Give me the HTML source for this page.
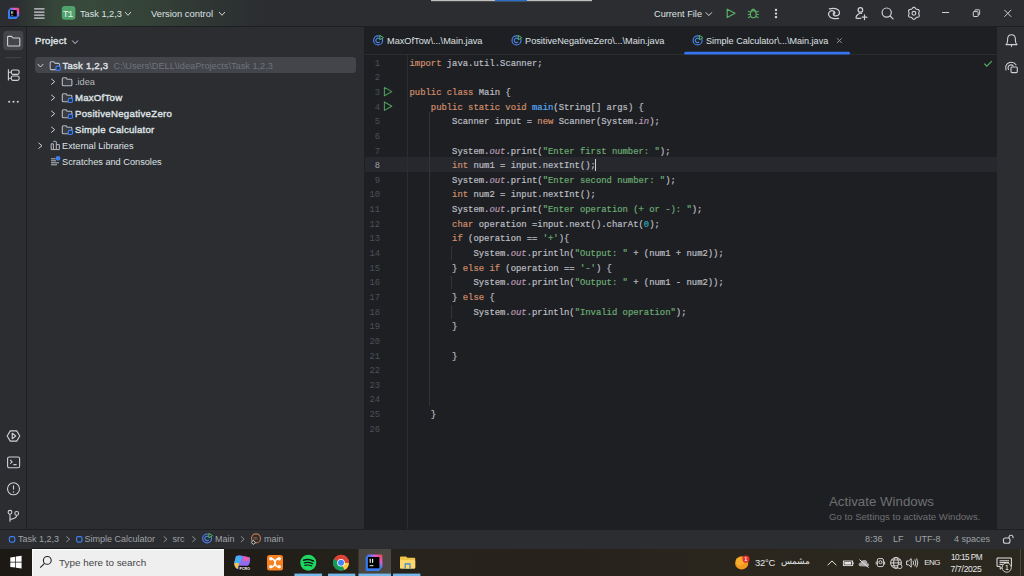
<!DOCTYPE html>
<html><head><meta charset="utf-8">
<style>
*{margin:0;padding:0;box-sizing:border-box}
html,body{width:1024px;height:576px;overflow:hidden;background:#2B2D30;font-family:"Liberation Sans",sans-serif;color:#DFE1E5}
.a{position:absolute}
#tb{left:0;top:0;width:1024px;height:27px;background:#2B2D30;border-bottom:1px solid #1E1F22}
#glow{left:0;top:0;width:300px;height:26px;background:linear-gradient(90deg,rgba(84,140,84,0) 14px,rgba(84,140,84,.27) 55px,rgba(84,140,84,.30) 90px,rgba(84,140,84,.2) 160px,rgba(84,140,84,.08) 215px,rgba(84,140,84,0) 265px)}
#ls{left:0;top:27px;width:27px;height:503px;background:#2B2D30;border-right:1px solid #1E1F22}
#pp{left:27px;top:27px;width:338px;height:503px;background:#2B2D30;border-right:1px solid #1E1F22}
#ed{left:365px;top:27px;width:632px;height:503px;background:#1E1F22}
#rs{left:996px;top:27px;width:28px;height:503px;background:#2B2D30;border-left:1px solid #1E1F22}
#sb{left:0;top:529px;width:1024px;height:20px;background:#2B2D30;border-top:1px solid #1E1F22}
#tk{left:0;top:549px;width:1024px;height:27px;background:linear-gradient(90deg,#1c1915 0%,#1f1c17 22%,#28241d 42%,#27231c 55%,#2a261e 70%,#2b2820 100%)}
.ui{font-size:9.2px;white-space:nowrap;line-height:12px}
.b{font-weight:bold}
.sb{-webkit-text-stroke:.4px #DFE1E5;letter-spacing:.25px;font-size:9.6px}
.code{left:409.5px;font-family:"Liberation Mono",monospace;font-size:8.9px;white-space:pre;line-height:14.64px;color:#BCBEC4;-webkit-text-stroke-width:.2px}
.ln{left:350px;font-family:"Liberation Mono",monospace;font-size:8.8px;line-height:14.64px;text-align:right;width:30px}
.k{color:#CF8E6D}.s{color:#6AAB73}.n{color:#2AACB8}.m{color:#56A8F5}.f{color:#B898B4;font-style:italic}
.st{color:#A0A3A8;font-size:9px;line-height:12px;white-space:nowrap;margin-top:-.3px}
</style></head><body>
<div id="tb" class="a"></div>
<div id="glow" class="a"></div>
<div id="ls" class="a"></div>
<div id="pp" class="a"></div>
<div id="ed" class="a"></div>
<div id="rs" class="a"></div>
<div id="sb" class="a"></div>
<div id="tk" class="a"></div>

<!-- toolbar text -->
<div class="a ui" style="left:80px;top:8px">Task 1,2,3</div>
<div class="a ui" style="left:151px;top:8px;font-size:9.4px">Version control</div>
<div class="a ui" style="left:654px;top:8px">Current File</div>

<!-- project panel -->
<div class="a" style="left:35px;top:57.1px;width:321.3px;height:16.3px;background:#43454A;border-radius:3.5px"></div>
<div class="a ui sb" style="left:35px;top:35px">Project</div>
<div class="a ui sb" style="left:62.5px;top:59.6px;font-size:9.5px">Task 1,2,3</div><div class="a ui" style="left:113.5px;top:59.6px;color:#6F737A">C:\Users\DELL\IdeaProjects\Task 1,2,3</div>
<div class="a ui" style="left:75px;top:76px;color:#B9BBC0">.idea</div>
<div class="a ui sb" style="left:75px;top:92px">MaxOfTow</div>
<div class="a ui sb" style="left:75px;top:108px;letter-spacing:.3px">PositiveNegativeZero</div>
<div class="a ui sb" style="left:75px;top:124px">Simple Calculator</div>
<div class="a ui" style="left:62px;top:140px">External Libraries</div>
<div class="a ui" style="left:62px;top:156px">Scratches and Consoles</div>

<!-- tabs -->
<div class="a ui" style="left:387px;top:35px">MaxOfTow\...\Main.java</div>
<div class="a ui" style="left:525px;top:35px">PositiveNegativeZero\...\Main.java</div>
<div class="a ui" style="left:706px;top:35px;font-size:9.05px">Simple Calculator\...\Main.java</div>
<div class="a" style="left:365px;top:54px;width:632px;height:1px;background:#2B2D30"></div>

<!-- editor -->
<div class="a" style="left:365px;top:156.9px;width:632px;height:14.7px;background:#26282E"></div>
<div class="a" style="left:407px;top:55px;width:1px;height:474px;background:#2B2D30"></div>
<div class="a" style="left:429px;top:112px;width:1px;height:294px;background:#313438"></div>
<div class="a" style="left:450.5px;top:246px;width:1px;height:13.5px;background:#313438"></div>
<div class="a" style="left:450.5px;top:275.5px;width:1px;height:13.5px;background:#313438"></div>
<div class="a" style="left:450.5px;top:304.5px;width:1px;height:14px;background:#313438"></div>
<div class="a ln" style="top:56.70px;color:#4B5059">1</div>
<div class="a ln" style="top:71.34px;color:#4B5059">2</div>
<div class="a ln" style="top:85.98px;color:#4B5059">3</div>
<div class="a ln" style="top:100.62px;color:#4B5059">4</div>
<div class="a ln" style="top:115.26px;color:#4B5059">5</div>
<div class="a ln" style="top:129.90px;color:#4B5059">6</div>
<div class="a ln" style="top:144.54px;color:#4B5059">7</div>
<div class="a ln" style="top:159.18px;color:#A1A3AB">8</div>
<div class="a ln" style="top:173.82px;color:#4B5059">9</div>
<div class="a ln" style="top:188.46px;color:#4B5059">10</div>
<div class="a ln" style="top:203.10px;color:#4B5059">11</div>
<div class="a ln" style="top:217.74px;color:#4B5059">12</div>
<div class="a ln" style="top:232.38px;color:#4B5059">13</div>
<div class="a ln" style="top:247.02px;color:#4B5059">14</div>
<div class="a ln" style="top:261.66px;color:#4B5059">15</div>
<div class="a ln" style="top:276.30px;color:#4B5059">16</div>
<div class="a ln" style="top:290.94px;color:#4B5059">17</div>
<div class="a ln" style="top:305.58px;color:#4B5059">18</div>
<div class="a ln" style="top:320.22px;color:#4B5059">19</div>
<div class="a ln" style="top:334.86px;color:#4B5059">20</div>
<div class="a ln" style="top:349.50px;color:#4B5059">21</div>
<div class="a ln" style="top:364.14px;color:#4B5059">22</div>
<div class="a ln" style="top:378.78px;color:#4B5059">23</div>
<div class="a ln" style="top:393.42px;color:#4B5059">24</div>
<div class="a ln" style="top:408.06px;color:#4B5059">25</div>
<div class="a ln" style="top:422.70px;color:#4B5059">26</div>
<div class="a code" style="top:56.70px"><span class="k">import</span> java.util.Scanner;</div>
<div class="a code" style="top:85.98px"><span class="k">public class</span> Main {</div>
<div class="a code" style="top:100.62px">    <span class="k">public static void</span> <span class="m">main</span>(String[] args) {</div>
<div class="a code" style="top:115.26px">        Scanner input = <span class="k">new</span> Scanner(System.<span class="f">in</span>);</div>
<div class="a code" style="top:144.54px">        System.<span class="f">out</span>.print(<span class="s">"Enter first number: "</span>);</div>
<div class="a code" style="top:159.18px">        <span class="k">int</span> num1 = input.nextInt();</div>
<div class="a code" style="top:173.82px">        System.<span class="f">out</span>.print(<span class="s">"Enter second number: "</span>);</div>
<div class="a code" style="top:188.46px">        <span class="k">int</span> num2 = input.nextInt();</div>
<div class="a code" style="top:203.10px">        System.<span class="f">out</span>.print(<span class="s">"Enter operation (+ or -): "</span>);</div>
<div class="a code" style="top:217.74px">        <span class="k">char</span> operation =input.next().charAt(<span class="n">0</span>);</div>
<div class="a code" style="top:232.38px">        <span class="k">if</span> (operation == <span class="s">'+'</span>){</div>
<div class="a code" style="top:247.02px">            System.<span class="f">out</span>.println(<span class="s">"Output: "</span> + (num1 + num2));</div>
<div class="a code" style="top:261.66px">        } <span class="k">else if</span> (operation == <span class="s">'-'</span>) {</div>
<div class="a code" style="top:276.30px">            System.<span class="f">out</span>.println(<span class="s">"Output: "</span> + (num1 - num2));</div>
<div class="a code" style="top:290.94px">        } <span class="k">else</span> {</div>
<div class="a code" style="top:305.58px">            System.<span class="f">out</span>.println(<span class="s">"Invalid operation"</span>);</div>
<div class="a code" style="top:320.22px">        }</div>
<div class="a code" style="top:349.50px">        }</div>
<div class="a code" style="top:408.06px">    }</div>
<div class="a" style="left:595.3px;top:158.5px;width:1px;height:12px;background:#CED0D6"></div>

<!-- status bar -->
<div class="a st" style="left:18px;top:533px">Task 1,2,3</div>
<div class="a st" style="left:84.5px;top:533px">Simple Calculator</div>
<div class="a st" style="left:172.5px;top:533px">src</div>
<div class="a st" style="left:215px;top:533px">Main</div>
<div class="a st" style="left:264px;top:533px">main</div>
<div class="a st" style="left:865px;top:533px">8:36</div>
<div class="a st" style="left:893px;top:533px">LF</div>
<div class="a st" style="left:915px;top:533px">UTF-8</div>
<div class="a st" style="left:954px;top:533px">4 spaces</div>

<!-- activate windows -->
<div class="a" style="left:829px;top:493.5px;font-size:13.3px;color:#6E6F72;white-space:nowrap">Activate Windows</div>
<div class="a" style="left:829px;top:511px;font-size:9.6px;color:#6E6F72;white-space:nowrap">Go to Settings to activate Windows.</div>

<!-- taskbar -->
<div class="a" style="left:32px;top:548px;width:192px;height:1px;background:#1b1b1c"></div><div class="a" style="left:32px;top:549px;width:192px;height:27px;background:#EFEFEF;border-top:1px solid #FFFFFF;border-left:1px solid #FAFAFA"></div>
<div class="a" style="left:59px;top:556.5px;font-size:9.9px;color:#444444;white-space:nowrap">Type here to search</div>
<div class="a" style="left:755px;top:556.8px;font-size:9.4px;letter-spacing:-0.25px;color:#E6E6E6;white-space:nowrap">32°C</div>
<div class="a" style="left:781px;top:555px;font-size:9.4px;color:#E6E6E6;white-space:nowrap">مشمس</div>
<div class="a" style="left:924.3px;top:557.6px;font-size:8px;letter-spacing:-0.6px;color:#E6E6E6;white-space:nowrap">ENG</div>
<div class="a" style="left:951px;top:552.8px;font-size:8.2px;letter-spacing:-0.5px;color:#E6E6E6;white-space:nowrap">10:15 PM</div>
<div class="a" style="left:950.5px;top:564px;font-size:8.6px;letter-spacing:-0.3px;color:#E6E6E6;white-space:nowrap">7/7/2025</div>

<svg class="a" style="left:0;top:0" width="1024" height="576" viewBox="0 0 1024 576">
<rect x="431" y="0" width="161" height="1.2" fill="#BFBFBF"/><rect x="495" y="0" width="32" height="1.2" fill="#2A6FC9"/>
<defs><linearGradient id="ijg" x1="0" y1="1" x2="1" y2="0"><stop offset="0" stop-color="#2F7BF5"/><stop offset=".55" stop-color="#3D7BF0"/><stop offset=".72" stop-color="#D85FD4"/><stop offset="1" stop-color="#F2453A"/></linearGradient></defs>
<path d="M10.5 7.8 H18.2 Q19.2 7.8 19.2 8.8 V15.8 L16.2 19 H9 Q8 19 8 18 V10.5 Z" fill="url(#ijg)"/>
<rect x="10.1" y="10.1" width="6.6" height="6.4" fill="#000"/><rect x="11" y="11.2" width="0.8" height="2.6" fill="#ddd"/><rect x="12.4" y="11.2" width="0.8" height="2.6" fill="#ddd"/><rect x="11" y="14.9" width="2.2" height="0.6" fill="#ccc"/>
<rect x="34" y="8.2" width="10.6" height="1.3" rx=".5" fill="#CED0D6"/>
<rect x="34" y="11.4" width="10.6" height="1.3" rx=".5" fill="#CED0D6"/>
<rect x="34" y="14.4" width="10.6" height="1.3" rx=".5" fill="#CED0D6"/>
<rect x="34" y="17.4" width="10.6" height="1.3" rx=".5" fill="#CED0D6"/>
<rect x="61.8" y="6" width="13.6" height="13.7" rx="3" fill="#4FA36A"/>
<text x="62.8" y="16.7" font-family="Liberation Mono" font-size="9.6" fill="#E4EEE6" letter-spacing="-1.1">T1</text>
<path d="M125.3 12.3 L128.0 15.3 L130.7 12.3" stroke="#CED0D6" stroke-width="1" fill="none" stroke-linecap="round" stroke-linejoin="round"/>
<path d="M219.3 12.3 L222.0 15.3 L224.7 12.3" stroke="#CED0D6" stroke-width="1" fill="none" stroke-linecap="round" stroke-linejoin="round"/>
<path d="M706.0 12.6 L708.8 15.6 L711.6 12.6" stroke="#CED0D6" stroke-width="1" fill="none" stroke-linecap="round" stroke-linejoin="round"/>
<path d="M72.5 40.8 L75.1 43.6 L77.7 40.8" stroke="#CED0D6" stroke-width="1" fill="none" stroke-linecap="round" stroke-linejoin="round"/>
<path d="M727.2 9.2 L735 13.3 L727.2 17.5 Z" stroke="#5AAE68" stroke-width="1.2" fill="none" stroke-linejoin="round"/>
<g stroke="#5AAE68" stroke-width="1.1" fill="none" stroke-linecap="round"><ellipse cx="753.3" cy="14.2" rx="2.9" ry="3.6"/><path d="M751.3 10.6 Q753.3 7.6 755.3 10.6"/><path d="M748.3 11.3 L750.4 12.3 M758.3 11.3 L756.2 12.3 M748.2 14.5 H750.3 M758.4 14.5 H756.3 M748.4 17.6 L750.6 16.5 M758.2 17.6 L756 16.5"/></g>
<rect x="774.9" y="8.8" width="2.2" height="2.2" rx=".6" fill="#CED0D6"/>
<rect x="774.9" y="12.4" width="2.2" height="2.2" rx=".6" fill="#CED0D6"/>
<rect x="774.9" y="16.0" width="2.2" height="2.2" rx=".6" fill="#CED0D6"/>
<g stroke="#CED0D6" stroke-width="1.25" fill="none" stroke-linecap="round"><path d="M829.4 8.8 C833 8.1 838 8.4 839.3 11.6 C840.3 14.5 837.5 16.4 835 15.9 C833 15.4 832.6 13.1 834.3 12.4"/><path d="M838.6 18.3 C835 19 830 18.6 828.7 15.3 C827.8 12.5 830.3 10.4 833 10.8 C835 11.2 835.6 13.5 833.9 14.2"/></g>
<g stroke="#CED0D6" stroke-width="1.2" fill="none" stroke-linecap="round"><circle cx="860.4" cy="9.9" r="2.3"/><path d="M861.6 13.4 Q860 12.9 858.6 13.9 Q856 15.4 856 17.4 Q856 18.4 857 18.4 H860.6"/><path d="M862.1 17.2 H866.9 M864.5 14.8 V19.6"/></g>
<g stroke="#CED0D6" stroke-width="1.2" fill="none" stroke-linecap="round"><circle cx="886.7" cy="12.6" r="4.6"/><path d="M890.1 16 L893 18.9"/></g>
<path d="M913.90 7.30 L914.42 7.40 L914.89 7.69 L915.30 8.08 L915.64 8.51 L915.96 8.88 L916.30 9.14 L916.70 9.30 L917.18 9.39 L917.72 9.48 L918.27 9.64 L918.75 9.90 L919.10 10.30 L919.26 10.80 L919.26 11.35 L919.12 11.90 L918.92 12.41 L918.76 12.87 L918.70 13.30 L918.76 13.73 L918.92 14.19 L919.12 14.70 L919.26 15.25 L919.26 15.80 L919.10 16.30 L918.75 16.70 L918.27 16.96 L917.72 17.12 L917.18 17.21 L916.70 17.30 L916.30 17.46 L915.96 17.72 L915.64 18.09 L915.30 18.52 L914.89 18.91 L914.42 19.20 L913.90 19.30 L913.38 19.20 L912.91 18.91 L912.50 18.52 L912.16 18.09 L911.84 17.72 L911.50 17.46 L911.10 17.30 L910.62 17.21 L910.08 17.12 L909.53 16.96 L909.05 16.70 L908.70 16.30 L908.54 15.80 L908.54 15.25 L908.68 14.70 L908.88 14.19 L909.04 13.73 L909.10 13.30 L909.04 12.87 L908.88 12.41 L908.68 11.90 L908.54 11.35 L908.54 10.80 L908.70 10.30 L909.05 9.90 L909.53 9.64 L910.08 9.48 L910.62 9.39 L911.10 9.30 L911.50 9.14 L911.84 8.88 L912.16 8.51 L912.50 8.08 L912.91 7.69 L913.38 7.40 Z" stroke="#CED0D6" stroke-width="1.15" fill="none"/><circle cx="913.9" cy="13.3" r="1.9" stroke="#CED0D6" stroke-width="1.15" fill="none"/>
<g stroke="#CED0D6" stroke-width="1" fill="none"><path d="M942 12.5 H949.1"/><rect x="973.3" y="11.6" width="4.8" height="4.9" rx=".6"/><path d="M974.9 11.6 V10.4 Q974.9 9.8 975.5 9.8 H979 Q979.6 9.8 979.6 10.4 V14.2 Q979.6 14.8 979 14.8 H978.1"/><path d="M1004.4 9.9 L1011.2 16.8 M1011.2 9.9 L1004.4 16.8"/></g>
<rect x="3.2" y="30.8" width="20.2" height="19.4" rx="4" fill="#43454A"/>
<path d="M7.6 37.2 Q7.6 36.4 8.4 36.4 H11.6 L13 38 H19 Q19.8 38 19.8 38.8 V45.3 Q19.8 46 19 46 H8.4 Q7.6 46 7.6 45.3 Z" stroke="#CED0D6" stroke-width="1.1" fill="none" stroke-linejoin="round"/>
<rect x="5.5" y="57.2" width="15.5" height="1" fill="#45474C"/>
<g stroke="#CED0D6" stroke-width="1.1" fill="none"><path d="M8.4 69.2 V80.6 M8.4 72.2 H11.2 M8.4 78.2 H11.2"/><rect x="11.3" y="70" width="7.8" height="4.4" rx="1.6"/><rect x="11.3" y="76" width="7.8" height="4.4" rx="1.6"/></g>
<circle cx="9.2" cy="101.8" r="1.05" fill="#CED0D6"/>
<circle cx="13.5" cy="101.8" r="1.05" fill="#CED0D6"/>
<circle cx="17.8" cy="101.8" r="1.05" fill="#CED0D6"/>
<g stroke="#CED0D6" stroke-width="1.1" fill="none" stroke-linejoin="round"><path d="M10.3 430.9 H16.7 L19.8 436 L16.7 441.1 H10.3 L7.2 436 Z"/><path d="M12.2 433.3 L15.8 436 L12.2 438.7 Z"/></g>
<g stroke="#CED0D6" stroke-width="1.1" fill="none" stroke-linejoin="round"><rect x="7.6" y="457" width="12" height="10.8" rx="1.6"/><path d="M10.2 460 L12.2 461.8 L10.2 463.6 M13.4 464.6 H16.6"/></g>
<g stroke="#CED0D6" stroke-width="1.1" fill="none"><circle cx="13.5" cy="488.8" r="6"/><path d="M13.5 485.4 V489.6"/></g><circle cx="13.5" cy="491.9" r=".75" fill="#CED0D6"/>
<g stroke="#CED0D6" stroke-width="1.1" fill="none"><circle cx="10" cy="512.3" r="1.9"/><circle cx="16.7" cy="513.4" r="1.9"/><path d="M10 514.2 V521.8 M16.7 515.3 Q16.7 518.5 10.2 519.4"/></g>
<path d="M37.9 64.2 L40.5 67.0 L43.1 64.2" stroke="#CED0D6" stroke-width="1" fill="none" stroke-linecap="round" stroke-linejoin="round"/>
<path d="M50.2 62.8 Q50.2 61.8 51.2 61.8 H53.8 L55.2 63.4 H58.6 Q59.6 63.4 59.6 64.4 V68.6 Q59.6 69.6 58.6 69.6 H51.2 Q50.2 69.6 50.2 68.6 Z" stroke="#B7BAC1" stroke-width="1.1" fill="#3A3C41" stroke-linejoin="round"/>
<rect x="56.0" y="66.2" width="4.2" height="4.2" rx="1.2" fill="#22324F" stroke="#3D7EF0" stroke-width="1.2"/>
<path d="M51.5 79.1 L54.7 81.7 L51.5 84.3" stroke="#CED0D6" stroke-width="1" fill="none" stroke-linecap="round" stroke-linejoin="round"/>
<path d="M62.3 78.7 Q62.3 77.7 63.3 77.7 H65.9 L67.3 79.3 H70.9 Q71.9 79.3 71.9 80.3 V84.7 Q71.9 85.7 70.9 85.7 H63.3 Q62.3 85.7 62.3 84.7 Z" stroke="#B7BAC1" stroke-width="1.1" fill="#3A3C41" stroke-linejoin="round"/>
<path d="M51.5 95.1 L54.7 97.7 L51.5 100.3" stroke="#CED0D6" stroke-width="1" fill="none" stroke-linecap="round" stroke-linejoin="round"/>
<path d="M62.3 94.7 Q62.3 93.7 63.3 93.7 H65.9 L67.3 95.3 H70.9 Q71.9 95.3 71.9 96.3 V100.7 Q71.9 101.7 70.9 101.7 H63.3 Q62.3 101.7 62.3 100.7 Z" stroke="#B7BAC1" stroke-width="1.1" fill="#3A3C41" stroke-linejoin="round"/>
<rect x="68.3" y="98.3" width="4.2" height="4.2" rx="1.2" fill="#22324F" stroke="#3D7EF0" stroke-width="1.2"/>
<path d="M51.5 111.1 L54.7 113.7 L51.5 116.3" stroke="#CED0D6" stroke-width="1" fill="none" stroke-linecap="round" stroke-linejoin="round"/>
<path d="M62.3 110.7 Q62.3 109.7 63.3 109.7 H65.9 L67.3 111.3 H70.9 Q71.9 111.3 71.9 112.3 V116.7 Q71.9 117.7 70.9 117.7 H63.3 Q62.3 117.7 62.3 116.7 Z" stroke="#B7BAC1" stroke-width="1.1" fill="#3A3C41" stroke-linejoin="round"/>
<rect x="68.3" y="114.3" width="4.2" height="4.2" rx="1.2" fill="#22324F" stroke="#3D7EF0" stroke-width="1.2"/>
<path d="M51.5 127.1 L54.7 129.7 L51.5 132.3" stroke="#CED0D6" stroke-width="1" fill="none" stroke-linecap="round" stroke-linejoin="round"/>
<path d="M62.3 126.7 Q62.3 125.7 63.3 125.7 H65.9 L67.3 127.3 H70.9 Q71.9 127.3 71.9 128.3 V132.7 Q71.9 133.7 70.9 133.7 H63.3 Q62.3 133.7 62.3 132.7 Z" stroke="#B7BAC1" stroke-width="1.1" fill="#3A3C41" stroke-linejoin="round"/>
<rect x="68.3" y="130.3" width="4.2" height="4.2" rx="1.2" fill="#22324F" stroke="#3D7EF0" stroke-width="1.2"/>
<path d="M38.8 143.1 L42.0 145.7 L38.8 148.3" stroke="#CED0D6" stroke-width="1" fill="none" stroke-linecap="round" stroke-linejoin="round"/>
<g stroke="#B7BAC1" stroke-width="1" fill="none" stroke-linejoin="round"><path d="M51.2 143.8 H53.4 V149.6 H51.2 Z M53.4 142 Q53.4 141.3 54.2 141.3 H55.5 Q56.3 141.3 56.3 142 V149.6 H53.4 M56.3 144.6 H59.3 V149.6 H56.3"/></g>
<g fill="#B7BAC1"><rect x="51" y="158.3" width="4.6" height="1"/><rect x="51" y="160.3" width="5" height="1"/><rect x="51" y="162.3" width="8" height="1"/><rect x="51" y="164.3" width="6" height="1"/></g><circle cx="58" cy="158.3" r="2.4" fill="#3D7EF0"/>
<g stroke="#4B84E8" stroke-width="1.15" fill="none"><circle cx="378.1" cy="40.4" r="4.5"/><path d="M379.7 39.0 A2.2 2.2 0 1 0 379.7 41.8"/></g>
<path d="M379.9 35.4 L383.4 37.6 L379.9 39.8 Z" fill="#1E1F22" stroke="#58B368" stroke-width="1" stroke-linejoin="round"/>
<g stroke="#4B84E8" stroke-width="1.15" fill="none"><circle cx="516.5" cy="40.4" r="4.5"/><path d="M518.1 39.0 A2.2 2.2 0 1 0 518.1 41.8"/></g>
<path d="M518.3 35.4 L521.8 37.6 L518.3 39.8 Z" fill="#1E1F22" stroke="#58B368" stroke-width="1" stroke-linejoin="round"/>
<g stroke="#4B84E8" stroke-width="1.15" fill="none"><circle cx="697.6" cy="40.4" r="4.5"/><path d="M699.2 39.0 A2.2 2.2 0 1 0 699.2 41.8"/></g>
<path d="M699.4 35.4 L702.9 37.6 L699.4 39.8 Z" fill="#1E1F22" stroke="#58B368" stroke-width="1" stroke-linejoin="round"/>
<path d="M837 38.2 L841.8 43 M841.8 38.2 L837 43" stroke="#8C8F94" stroke-width="1"/>
<rect x="684.2" y="51.8" width="165.8" height="2.8" rx="1.4" fill="#3574F0"/>
<path d="M384.4 87.4 L391.8 91.6 L384.4 95.8 Z" stroke="#4E9E5E" stroke-width="1.05" fill="none" stroke-linejoin="round"/>
<path d="M384.4 102.0 L391.8 106.2 L384.4 110.4 Z" stroke="#4E9E5E" stroke-width="1.05" fill="none" stroke-linejoin="round"/>
<path d="M984.3 63.6 L986.8 66.2 L991.8 61.2" stroke="#5AAE68" stroke-width="1.2" fill="none"/>
<g stroke="#CED0D6" stroke-width="1.1" fill="none" stroke-linejoin="round"><path d="M1006 44.6 H1017 Q1015.4 43 1015.4 40.5 V39.5 Q1015.4 34.8 1011.5 34.8 Q1007.6 34.8 1007.6 39.5 V40.5 Q1007.6 43 1006 44.6 Z"/><path d="M1011.5 44.8 V46.8"/></g>
<g stroke="#CED0D6" stroke-width="1.1" fill="none" stroke-linecap="round"><path d="M1006 70 Q1004.5 64.5 1009.5 62.5 Q1014 61.6 1016 64.8"/><path d="M1008.5 69.5 Q1007 66.5 1010 65 Q1012 64.5 1013.2 66"/><rect x="1011" y="67" width="6.3" height="5.6" rx="1"/></g>
<rect x="9.4" y="536.7" width="5.4" height="5.4" rx="1.5" fill="none" stroke="#3D7EF0" stroke-width="1.2"/>
<rect x="76.6" y="536.7" width="5.4" height="5.4" rx="1.5" fill="none" stroke="#3D7EF0" stroke-width="1.2"/>
<path d="M66.6 536.7 L69.6 539.2 L66.6 541.7" stroke="#8C8F94" stroke-width="1" fill="none" stroke-linecap="round" stroke-linejoin="round"/>
<path d="M164.0 536.7 L167.0 539.2 L164.0 541.7" stroke="#8C8F94" stroke-width="1" fill="none" stroke-linecap="round" stroke-linejoin="round"/>
<path d="M192.6 536.7 L195.6 539.2 L192.6 541.7" stroke="#8C8F94" stroke-width="1" fill="none" stroke-linecap="round" stroke-linejoin="round"/>
<path d="M241.2 536.7 L244.2 539.2 L241.2 541.7" stroke="#8C8F94" stroke-width="1" fill="none" stroke-linecap="round" stroke-linejoin="round"/>
<g stroke="#4B84E8" stroke-width="1.15" fill="none"><circle cx="207.1" cy="538.4" r="4.4"/><path d="M208.7 537.0 A2.2 2.2 0 1 0 208.7 539.8"/></g>
<path d="M208.9 533.4 L212.4 535.6 L208.9 537.8 Z" fill="#1E1F22" stroke="#58B368" stroke-width="1" stroke-linejoin="round"/>
<g stroke="#C77A50" stroke-width="1.1" fill="none"><circle cx="256" cy="538.4" r="4.5"/></g><text x="253.2" y="540.4" font-family="Liberation Sans" font-size="5" fill="#C77A50">m</text><path d="M253.3 540.3 L255.4 542.4 L253.3 544.5 L251.2 542.4 Z" fill="#2B2D30" stroke="#D0D0D0" stroke-width="1"/>
<g stroke="#CED0D6" stroke-width="1.1" fill="none"><rect x="1003.4" y="538" width="6.6" height="5.3" rx="2"/><path d="M1009 538 V537.2 Q1009 535.2 1011 535.2 Q1013 535.2 1013 537.2 V538.3"/></g>
<g fill="#FFFFFF"><path d="M10.3 557.4 L15.3 556.7 V561.8 H10.3 Z"/><path d="M16 556.6 L21.6 555.8 V561.8 H16 Z"/><path d="M10.3 562.5 H15.3 V567.6 L10.3 566.9 Z"/><path d="M16 562.5 H21.6 V568.4 L16 567.7 Z"/></g>
<g stroke="#222" stroke-width="1.1" fill="none"><circle cx="47.3" cy="560.4" r="3.9"/><path d="M44.5 563.3 L40.2 567.6"/></g>
<rect x="358.5" y="549" width="32.5" height="27" fill="#FFFFFF" fill-opacity=".17"/>
<rect x="294.4" y="573.6" width="27.7" height="2.4" fill="#76B9ED"/>
<rect x="328.0" y="573.6" width="27.3" height="2.4" fill="#76B9ED"/>
<rect x="358.5" y="573.6" width="32.5" height="2.4" fill="#76B9ED"/>
<rect x="393.0" y="573.6" width="27.4" height="2.4" fill="#76B9ED"/>
<path d="M236 556 Q240 554.5 243 556 L249.8 557.5 Q251 562 248 566 L240 569.5 Q235 569 234 564 Z" fill="#8F6CF0"/><path d="M236 556.5 Q239 555 242 557 L240 563 Q236 565 234.2 563 Z" fill="#43B0F0"/><path d="M243.5 556 L249.5 557.5 L248.5 561 L243 561 Z" fill="#E85DA8"/><path d="M234.5 563 L239 563 L238 569 Q235 568 234.5 565Z" fill="#F1C93B"/><rect x="238.5" y="565.8" width="12" height="4.6" rx="1" fill="#111"/><text x="239.6" y="569.6" font-family="Liberation Sans" font-size="3.6" font-weight="bold" fill="#fff">PCRO</text>
<rect x="267" y="555" width="16" height="15.6" rx="2.5" fill="#F7801F"/><g stroke="#FFF" stroke-width="1.5" fill="none"><path d="M270.6 558.6 Q274.5 558.6 275 562.8 Q275.5 567 279.4 567 M279.4 558.6 Q275.5 558.6 275 562.8 Q274.5 567 270.6 567"/><circle cx="270.8" cy="558.8" r="1"/><circle cx="279.2" cy="558.8" r="1"/><circle cx="270.8" cy="566.8" r="1"/><circle cx="279.2" cy="566.8" r="1"/></g>
<circle cx="308.3" cy="562.7" r="8" fill="#1ED760"/><g stroke="#121212" stroke-linecap="round" fill="none"><path d="M303.6 560.2 Q308.8 558.6 313.4 561" stroke-width="1.5"/><path d="M304.3 562.9 Q308.6 561.7 312.5 563.6" stroke-width="1.3"/><path d="M304.9 565.4 Q308.4 564.5 311.6 566" stroke-width="1.1"/></g>
<circle cx="341" cy="562.7" r="8" fill="#DB4437"/><path d="M341 562.7 L334.1 566.7 A8 8 0 0 0 344.5 569.9 Z" fill="#0F9D58"/><path d="M341 562.7 L344.5 569.9 A8 8 0 0 0 348.9 562.7 Z" fill="#FFCD40"/><path d="M341 562.7 L334.1 566.7 A8 8 0 0 1 334.1 558.7 Z" fill="#0F9D58"/><path d="M341 562.7 L348.9 562.7 A8 8 0 0 0 341 554.7 L334.1 558.7 Z" fill="#DB4437"/><circle cx="341" cy="562.7" r="3.8" fill="#fff"/><circle cx="341" cy="562.7" r="3" fill="#4285F4"/>
<path d="M368 554.6 H381.6 Q382.4 554.6 382.4 555.4 V567 L379 570.9 H366.4 Q365.7 570.9 365.7 570.1 V557.5 Z" fill="url(#ijg)"/><rect x="367.9" y="557" width="11.5" height="11.3" fill="#000"/><g fill="#eee"><rect x="369.6" y="558.8" width="1.2" height="4"/><rect x="372" y="558.8" width="1.2" height="4"/><rect x="369.6" y="565.2" width="3.8" height="1"/></g>
<path d="M400 557.5 Q400 556.4 401 556.4 H406 L407.5 557.8 H414.2 Q415.2 557.8 415.2 558.8 V567.5 Q415.2 568.5 414.2 568.5 H401 Q400 568.5 400 567.5 Z" fill="#F0C54A"/><rect x="400" y="560" width="15.2" height="8.5" rx="1" fill="#FFD86B"/><rect x="404.6" y="563.2" width="6" height="5.3" fill="#3A8BD8"/><rect x="405.8" y="564.6" width="3.6" height="3.9" fill="#FFD86B"/>
<circle cx="741.7" cy="562.9" r="6.6" fill="#F39A1E"/><circle cx="740" cy="561.5" r="4" fill="#F7B733" opacity=".7"/><circle cx="745.9" cy="559.1" r="3.6" fill="#E5322D"/><text x="744.6" y="561.1" font-family="Liberation Sans" font-size="4.8" font-weight="bold" fill="#fff">1</text>
<path d="M827.6 565.3 L832 560.9 L836.4 565.3" stroke="#E6E6E6" stroke-width="1" fill="none"/>
<rect x="843.4" y="561" width="9.2" height="4.6" fill="none" stroke="#E6E6E6" stroke-width=".9"/><rect x="844.4" y="562" width="6.8" height="2.6" fill="#E6E6E6"/><rect x="852.6" y="562.3" width="1" height="2" fill="#E6E6E6"/>
<path d="M860.2 566.3 Q858.4 566.2 858.6 564.3 Q858.9 562.6 860.6 562.6 Q861.3 559.6 864.5 560 Q867.3 560.4 867.4 563.3 Q869.2 563.5 869.1 565.1 Q869 566.4 867.4 566.4 Z" fill="#A8A8A8"/><path d="M859.5 559.6 L868.6 567.6" stroke="#E6E6E6" stroke-width="1"/>
<g stroke="#E6E6E6" stroke-width=".9" fill="none"><rect x="877.4" y="558.6" width="6" height="8" rx="1.3"/><circle cx="880.4" cy="562.2" r="1.5"/><path d="M876.2 561.5 V564.5 M884.6 561.5 V564.5"/></g>
<g stroke="#E6E6E6" stroke-width=".9" fill="none"><circle cx="896" cy="562.9" r="5.4"/><ellipse cx="896" cy="562.9" rx="2.4" ry="5.4"/><path d="M890.6 562.9 H901.4 M891.4 560 H900.6 M891.4 565.8 H900.6"/></g><circle cx="899.8" cy="566.5" r="2.2" fill="#2a2619" stroke="#E6E6E6" stroke-width=".8"/>
<g stroke="#E6E6E6" stroke-width=".9" fill="none" stroke-linejoin="round"><path d="M906.6 561 H908.6 L911.2 558.6 V567.2 L908.6 564.8 H906.6 Z"/><path d="M913 560.8 Q914.2 562.9 913 565 M914.8 559.4 Q916.8 562.9 914.8 566.4 M916.6 558.4 Q919 562.9 916.6 567.4"/></g>
<g stroke="#E6E6E6" stroke-width="1" fill="none"><path d="M997 558 H1011.4 V566.4 H1003.4 L1000.2 569.2 V566.4 H997 Z"/><path d="M999.5 560.8 H1009 M999.5 562.6 H1009 M999.5 564.4 H1006"/></g><circle cx="1006.7" cy="567.6" r="4.6" fill="#2a2619" stroke="#DDD" stroke-width=".9"/><text x="1005.1" y="570.3" font-family="Liberation Sans" font-size="6.8" fill="#fff">1</text>
<rect x="1020" y="549" width="1" height="27" fill="#4a463a"/>
</svg>
</body></html>
